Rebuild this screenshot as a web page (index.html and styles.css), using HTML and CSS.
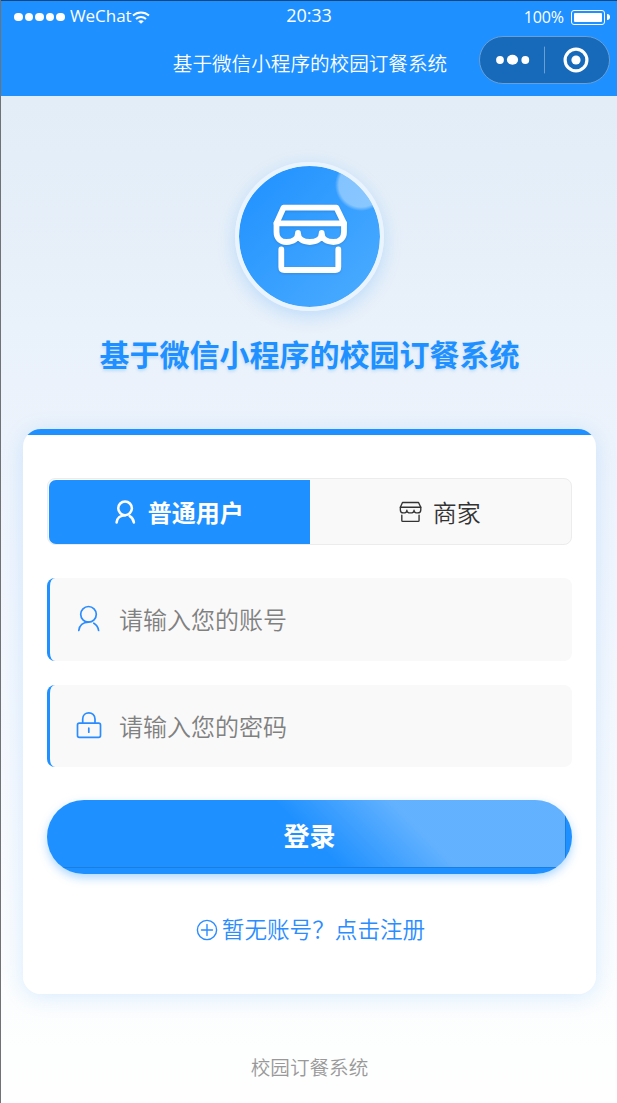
FILE: index.html
```
<!DOCTYPE html>
<html lang="zh-CN">
<head>
<meta charset="UTF-8">
<meta name="viewport" content="width=device-width, initial-scale=1.0">
<title>基于微信小程序的校园订餐系统</title>
<link rel="stylesheet" href="styles.css">
</head>
<body>
<!-- shared icons -->
<svg class="icon-defs" width="0" height="0">
  <symbol id="icon-shop" viewBox="0 0 76 72">
    <path d="M11.5 4.7H64.5L72 20.3H4.5Z"/>
    <path d="M4.5 20.3V29C4.5 35 8 39 14.5 39C21 39 26 36 26 30C26 36 31 39 37.8 39C44.5 39 49.7 36 49.7 30C49.7 36 55 39 61.5 39C68 39 72 35 72 29V20.3"/>
    <path d="M9.3 46.5V64Q9.3 67 12.3 67H63.3Q66.3 67 66.3 64V46.5"/>
  </symbol>
  <symbol id="icon-user" viewBox="0 0 24 27">
    <circle cx="11.5" cy="9.3" r="7.8"/>
    <path d="M1.8 25.5C2.3 20.5 6 17.2 11.5 17.1M16.8 18.2C19.8 19.8 21.2 22.5 21.6 25.5"/>
  </symbol>
</svg>

<div class="phone">
  <div class="header">
    <div class="status-bar">
      <div class="status-left">
        <span class="dot"></span><span class="dot"></span><span class="dot"></span><span class="dot"></span><span class="dot"></span>
        <span class="carrier">WeChat</span>
        <svg class="wifi" viewBox="0 0 18 13">
          <path d="M1 4.6C5.5 .4 12.5 .4 17 4.6M4 8C6.9 5.3 11.1 5.3 14 8"/>
          <path class="wifi-fill" d="M6.2 10.2C7.8 8.8 10.2 8.8 11.8 10.2L9 12.8Z"/>
        </svg>
      </div>
      <div class="time">20:33</div>
      <div class="status-right">
        <span class="percent">100%</span>
        <span class="battery"><span class="battery-level"></span></span>
        <span class="battery-cap"></span>
      </div>
    </div>
    <div class="nav">
      <div class="nav-title">基于微信小程序的校园订餐系统</div>
      <div class="capsule">
        <svg viewBox="0 0 129 46">
          <circle cx="20" cy="23" r="3.9"/>
          <ellipse cx="32.5" cy="22.7" rx="5.6" ry="5"/>
          <circle cx="45.3" cy="23" r="3.9"/>
          <path class="split" d="M64.5 10V36"/>
          <circle class="ring" cx="96" cy="23" r="10.9"/>
          <circle cx="96" cy="23" r="4.6"/>
        </svg>
      </div>
    </div>
  </div>

  <div class="content">
    <div class="logo">
      <svg class="logo-icon"><use href="#icon-shop"/></svg>
    </div>
    <h1>基于微信小程序的校园订餐系统</h1>

    <form class="card">
      <div class="tabs">
        <div class="tab active"><svg class="tab-user"><use href="#icon-user"/></svg>普通用户</div>
        <div class="tab"><svg class="tab-shop"><use href="#icon-shop"/></svg>商家</div>
      </div>
      <label class="field">
        <svg class="field-user"><use href="#icon-user"/></svg>
        <input type="text" placeholder="请输入您的账号">
      </label>
      <label class="field">
        <svg class="field-lock" viewBox="0 0 26 28">
          <rect x="1.5" y="12.2" width="23" height="14.2" rx="1.8"/>
          <path d="M6.7 12V8C6.7 -.3 19 -.3 19 8V12M12.8 17.2V21.2"/>
        </svg>
        <input type="password" placeholder="请输入您的密码">
      </label>
      <button type="button" class="login">登录</button>
      <a class="register">
        <svg viewBox="0 0 22 22"><circle cx="11" cy="11" r="9.6"/><path d="M5.5 11H16.5M11 5.5V16.5"/></svg>暂无账号？点击注册
      </a>
    </form>

    <div class="footer">校园订餐系统</div>
  </div>
</div>
</body>
</html>
```

FILE: styles.css
```
* {
    box-sizing: border-box;
}

body {
    margin: 0;
    font-family: "Open Sans", "Noto Sans CJK SC", sans-serif;
    font-weight: 350;
    color: #333;
}

svg {
    display: block;
    flex: none;
    fill: none;
    stroke: currentColor;
    stroke-linecap: round;
    stroke-linejoin: round;
}

.icon-defs {
    position: absolute;
}

.phone {
    height: 1103px;
    overflow: hidden;
    border-left: 1px solid #707276;
    background: linear-gradient(180deg, #e2edf7 0%, #e2edf7 9%, #f0f5fd 50%, #fdfefe 95%, #fefefe 100%);
}

/* status bar + title */
.header {
    height: 96px;
    margin-left: -1px;
    border-top: 1px solid #0f4880;
    border-left: 1px solid #0f4880;
    background: #1e90ff;
    color: #fff;
}

.status-bar,
.nav {
    display: grid;
    grid-template-columns: 1fr auto 1fr;
    align-items: center;
}

.status-bar {
    height: 31px;
    padding: 0 7px 0 13px;
    font-weight: 400;
}

.status-left,
.status-right {
    display: flex;
    align-items: center;
}

.status-right {
    justify-content: flex-end;
    padding-top: 1px;
}

.dot {
    width: 8.6px;
    height: 8.6px;
    margin-right: 2px;
    margin-top: 1px;
    border-radius: 50%;
    background: #fff;
}

.carrier {
    margin-left: 3px;
    padding-bottom: 2px;
    font-size: 17px;
    letter-spacing: -0.05px;
}

.wifi {
    width: 18px;
    height: 13px;
    margin-top: 2px;
    stroke-width: 2;
    stroke-linecap: butt;
}

.wifi-fill {
    fill: #fff;
    stroke: none;
}

.time {
    margin-right: 6px;
    padding-bottom: 3px;
    font-size: 18px;
    letter-spacing: -0.1px;
}

.percent {
    margin-right: 7px;
    font-size: 16px;
    letter-spacing: -0.1px;
}

.battery {
    width: 34px;
    height: 15px;
    padding: 2px;
    border: 1px solid #fff;
    border-radius: 3px;
}

.battery-level {
    display: block;
    height: 9px;
    border-radius: 1px;
    background: #fff;
}

.battery-cap {
    width: 3px;
    height: 6px;
    margin-left: 2px;
    border-radius: 0 3px 3px 0;
    background: #fff;
}

.nav {
    height: 56px;
    padding-right: 7px;
}

.nav-title {
    grid-column: 2;
    padding: 8px 0 0 9px;
    font-size: 19.6px;
    line-height: 28px;
}

.capsule {
    justify-self: end;
    width: 131px;
    height: 48px;
    border: 1px solid #679fd6;
    border-radius: 24px;
    background: #176ab9;
}

.capsule circle,
.capsule ellipse {
    fill: #fff;
    stroke: none;
}

.capsule .ring {
    fill: none;
    stroke: #fff;
    stroke-width: 3.2;
}

.capsule .split {
    stroke: #679fd6;
    stroke-width: 1;
}

/* page */
.content {
    display: flex;
    flex-direction: column;
    align-items: center;
    padding: 66px 21px 0 22px;
}

.logo {
    display: flex;
    align-items: center;
    justify-content: center;
    width: 149px;
    height: 149px;
    border: 4px solid #eaf4fe;
    border-radius: 50%;
    background:
        radial-gradient(circle at 122px 19px, rgba(255, 255, 255, 0.4) 22px, transparent 26px),
        linear-gradient(135deg, #1e90ff, #4dadff);
    background-clip: padding-box;
    box-shadow: 0 5px 18px rgba(30, 144, 255, 0.22);
}

.logo-icon {
    width: 76px;
    height: 72px;
    margin-top: 5px;
    margin-left: 1px;
    color: #fff;
    stroke-width: 5.8;
    filter: drop-shadow(0 1px 1px rgba(0, 0, 0, 0.12));
}

h1 {
    margin: 22px 0 0;
    color: #1e90ff;
    font-size: 30px;
    line-height: 44px;
    text-shadow: 0 2px 3px rgba(30, 144, 255, 0.2);
}

.card {
    width: 573px;
    height: 565px;
    margin-top: 52px;
    padding: 49px 24px 0;
    border-radius: 18px;
    background: linear-gradient(#1e90ff 6px, #fff 6px);
    box-shadow: 0 3px 22px rgba(30, 144, 255, 0.16);
}

.tabs {
    display: flex;
    height: 67px;
    padding: 1px 1px 0;
    border: 1px solid #ececec;
    border-radius: 8px;
    background: #f9f9f9;
}

.tab {
    flex: 1;
    display: flex;
    align-items: center;
    justify-content: center;
    padding-bottom: 2px;
    font-size: 24px;
}

.tab.active {
    border-radius: 7px 0 0 7px;
    background: #1e90ff;
    color: #fff;
    font-weight: bold;
}

.tab-user {
    width: 21px;
    height: 24px;
    margin-top: 2px;
    margin-right: 12px;
    stroke-width: 2.9;
}

.tab-shop {
    width: 23px;
    height: 22px;
    margin-top: 2px;
    margin-right: 11px;
    stroke-width: 4.5;
}

.field {
    display: flex;
    align-items: center;
    height: 83px;
    margin-top: 33px;
    padding-left: 27px;
    border-left: 3px solid #1e90ff;
    border-radius: 8px;
    background: #f9f9f9;
    color: #2b8cff;
}

.field + .field {
    height: 82px;
    margin-top: 24px;
}

.field svg {
    width: 24px;
    height: 27px;
    margin-right: 18px;
    margin-bottom: 2px;
    stroke-width: 1.7;
}

.field .field-lock {
    width: 26px;
    height: 28px;
    margin-left: -1px;
    margin-right: 17px;
}

.field input {
    flex: 1;
    padding: 0;
    border: 0;
    outline: none;
    background: transparent;
    font-family: inherit;
    font-size: 24px;
    font-weight: inherit;
}

.field input::placeholder {
    color: #808080;
}

.login {
    position: relative;
    display: block;
    width: 100%;
    height: 74px;
    margin-top: 33px;
    padding: 0 0 4px;
    overflow: hidden;
    border: 0;
    border-radius: 37px;
    background: #1e90ff;
    box-shadow: 0 4px 10px rgba(30, 144, 255, 0.35);
    color: #fff;
    font-family: inherit;
    font-size: 26px;
    font-weight: bold;
}

/* shine over the button */
.login::after {
    content: "";
    position: absolute;
    top: 0;
    left: 0;
    width: 518px;
    height: 67px;
    border-right: 1px solid rgba(0, 0, 0, 0.12);
    border-bottom: 1px solid rgba(0, 0, 0, 0.12);
    background: linear-gradient(45deg, transparent 50%, rgba(255, 255, 255, 0.3) 70%) no-repeat padding-box;
}

.register {
    display: flex;
    align-items: center;
    justify-content: center;
    margin-top: 40px;
    padding-left: 2px;
    color: #2b8cff;
    font-size: 22.6px;
    line-height: 32px;
}

.register svg {
    width: 22px;
    height: 22px;
    margin-right: 4px;
    margin-bottom: 1px;
    stroke-width: 1.4;
}

.footer {
    margin-top: 60px;
    color: #999;
    font-size: 19.6px;
    line-height: 28px;
}
```
